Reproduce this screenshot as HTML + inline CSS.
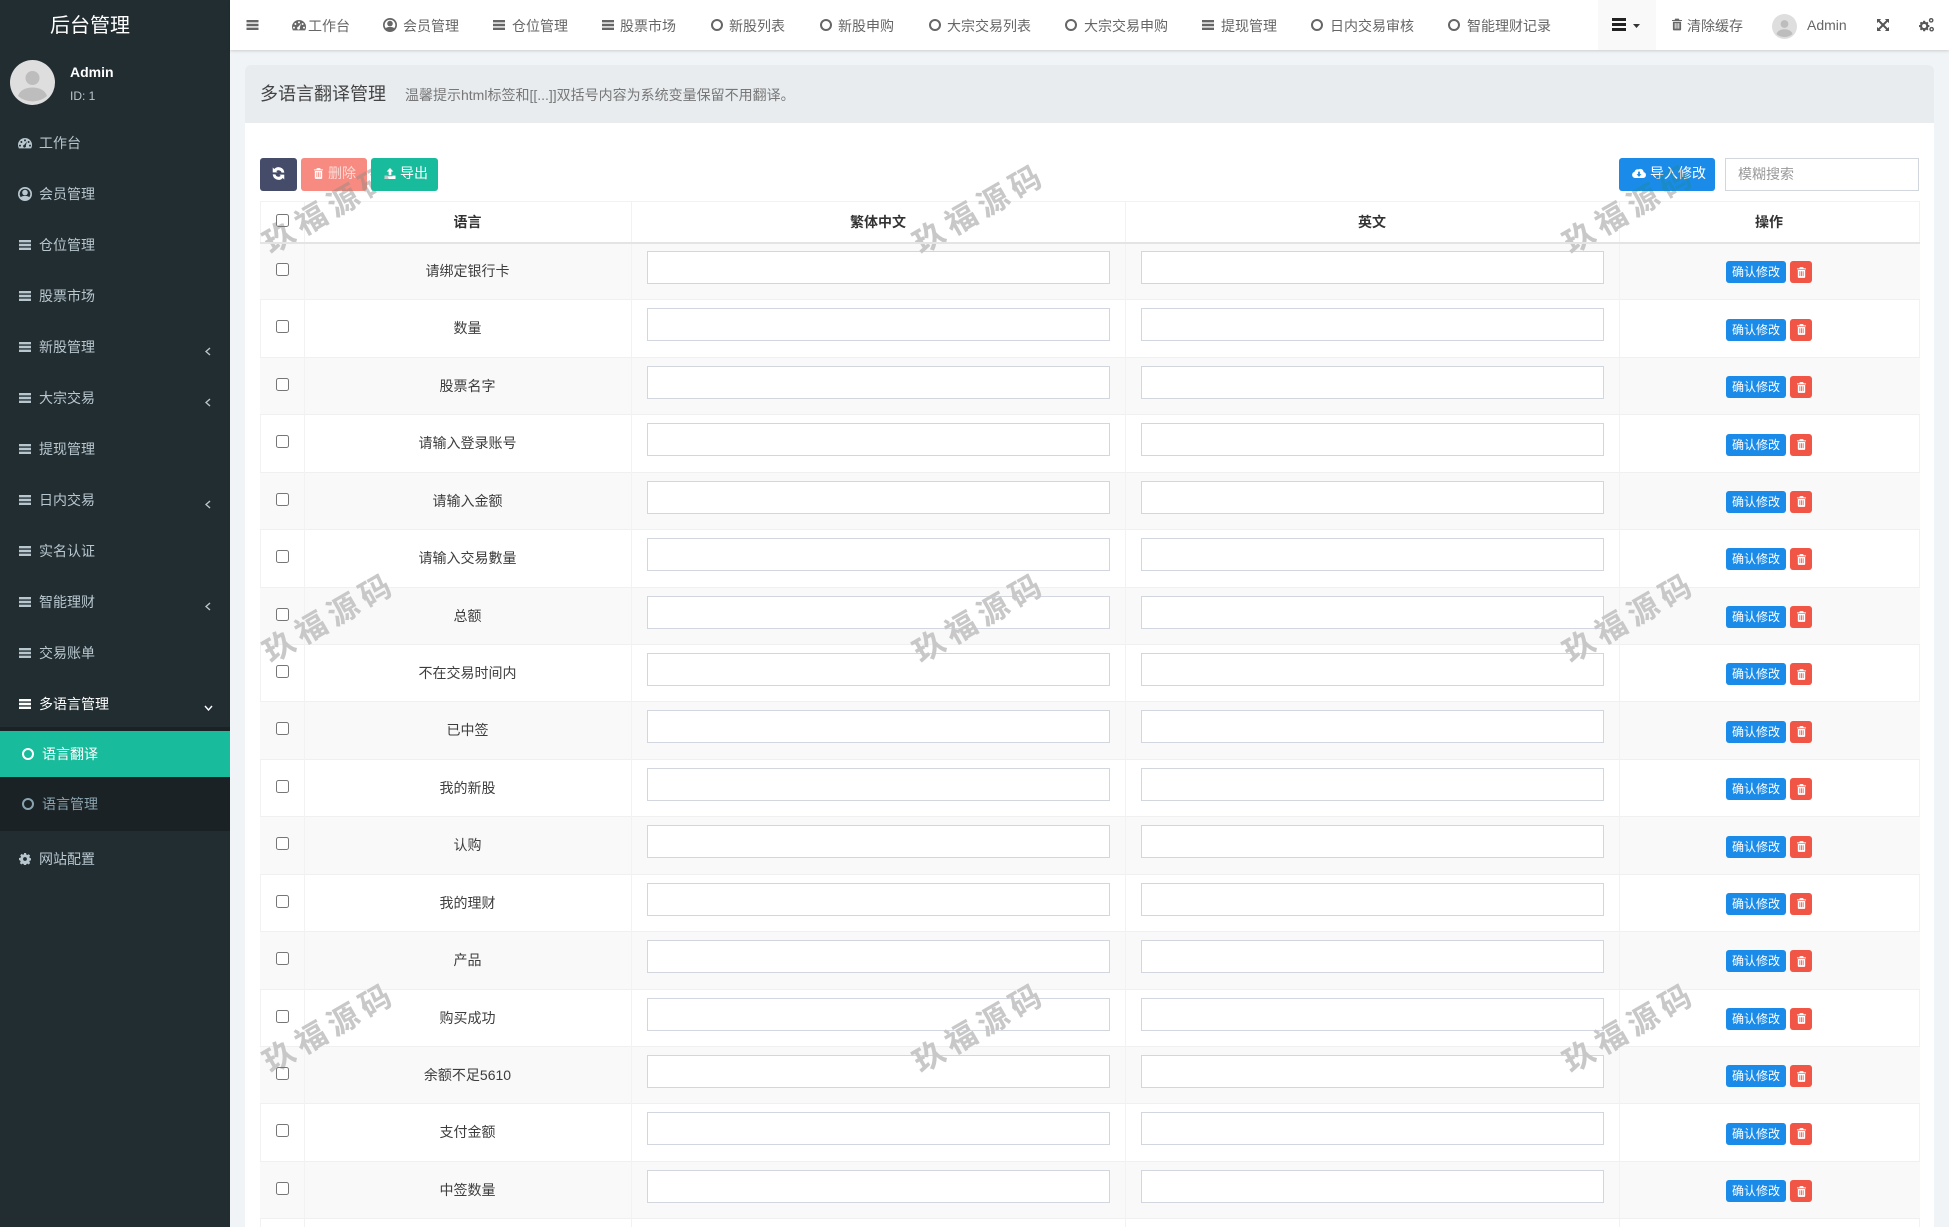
<!DOCTYPE html>
<html lang="zh-CN"><head><meta charset="utf-8"><title>多语言翻译管理</title>
<style>
*{box-sizing:border-box}
html,body{margin:0;padding:0;width:1949px;height:1227px;overflow:hidden;background:#f1f4f6;font-family:"Liberation Sans","Noto Sans CJK SC",sans-serif;font-size:14px;color:#444}
body{position:relative}
#wrap{position:absolute;left:0;top:0;width:1949px;height:1227px;overflow:hidden;contain:paint}
.a{position:absolute}
.t{position:absolute;line-height:20px;white-space:nowrap}
svg{position:absolute;fill:currentColor;display:block}
#side{position:absolute;left:0;top:0;width:230px;height:1227px;background:#222d32;color:#b8c7ce}
.mi{position:absolute;left:0;width:230px;height:20px}
.mi svg{left:19px;top:5px;width:12px;height:10px}
.mi svg.ic{left:18px;top:3px;width:14px;height:14px}
.mi span{position:absolute;left:39px;top:0;line-height:20px;white-space:nowrap}
.mi svg.chev{left:205px;top:10px;width:6px;height:9px;fill:none;stroke:currentColor;stroke-width:1.4}
#nav{position:absolute;left:230px;top:0;width:1719px;height:50px;background:#fff;box-shadow:0 1px 3px rgba(0,0,0,.16);color:#666}
.n{position:absolute;top:16px;line-height:20px;white-space:nowrap}
#nav svg{top:20px;width:12px;height:10px}
#nav svg.c{top:19px;width:12px;height:12px;fill:none;stroke:currentColor;stroke-width:2}
#nav svg.ic{top:18px;width:14px;height:14px}
#head{position:absolute;left:245px;top:65px;width:1689px;height:58px;background:#e8ecef;border-radius:6px 6px 0 0}
#card{position:absolute;left:245px;top:123px;width:1689px;height:1104px;background:#fff}
.btn{position:absolute;top:158px;height:33px;border-radius:3px;color:#fff}
.btn svg{top:10px;width:13px;height:13px}
.btn span{position:absolute;top:5px;line-height:20px;white-space:nowrap}
#tb{position:absolute;left:260px;top:201px;width:1660px;height:1026px;border:1px solid #f2f2f2;border-bottom:0}
.vl{position:absolute;top:201px;width:1px;height:1026px;background:#f2f2f2}
.th{position:absolute;top:212px;line-height:20px;font-weight:bold;color:#333;text-align:center}
.row{position:absolute;left:260px;width:1660px;height:57.43px;top:calc(241.95px + var(--i)*57.43px);border-top:1px solid #f0f0f0}
.row.g{background:#f9f9f9}
.chk{position:absolute;left:16px;top:20px;width:13px;height:13px;margin:0}
.l{position:absolute;left:44px;width:327px;top:18px;line-height:20px;text-align:center;color:#3d3d3d}
.inp{position:absolute;top:8px;height:33px;width:463px;border:1px solid #d2d6de;background:#fff;padding:0;margin:0}
.zh{left:387px}.en{left:881px}
.ok{position:absolute;left:1466px;top:18.3px;width:60px;height:22px;background:#1a8be8;border-radius:3px;color:#fff;font-size:12px;line-height:22px;text-align:center}
.del{position:absolute;left:1530px;top:18.3px;width:22px;height:22px;background:#f05545;border-radius:3px;color:#fff}
.del svg{left:6.5px;top:5.5px;width:9px;height:11px}
.wm{position:absolute;width:200px;margin-left:-100px;text-align:center;transform:translateY(-50%) rotate(-30deg);font:bold 31px "Noto Sans CJK SC","Liberation Sans",sans-serif;line-height:40px;letter-spacing:6px;text-indent:6px;color:#c8c8c8;mix-blend-mode:darken;white-space:nowrap;pointer-events:none}
</style></head><body><div id="wrap">
<svg width="0" height="0" style="position:absolute"><defs>
<symbol id="bars" viewBox="0 0 12 10"><path d="M0 0h12v2.400H0zM0 3.800h12v2.400H0zM0 7.600h12v2.400H0z"/></symbol>
<symbol id="circ" viewBox="0 0 12 12"><circle cx="6" cy="6" r="5"/></symbol>
<symbol id="dash" viewBox="0 0 14 14"><path fill-rule="evenodd" d="M7 2a7 7 0 0 1 7 7c0 1.300-.3 2.400-.9 3.400H.9A6.800 6.800 0 0 1 0 9a7 7 0 0 1 7-7zM7 3.400a1 1 0 1 0 0 2 1 1 0 0 0 0-2zM3.400 5a1 1 0 1 0 0 2 1 1 0 0 0 0-2zM10.600 5a1 1 0 1 0 0 2 1 1 0 0 0 0-2zM2 8.600a1 1 0 1 0 0 2 1 1 0 0 0 0-2zM12 8.600a1 1 0 1 0 0 2 1 1 0 0 0 0-2zM9 5.500L6.300 8.800a1.400 1.400 0 1 0 1.500.8z"/></symbol>
<symbol id="user" viewBox="0 0 14 14"><path fill-rule="evenodd" d="M7 0a7 7 0 1 1 0 14A7 7 0 0 1 7 0zM7 1.700a5.300 5.300 0 0 0-4.200 8.500C3.600 9.300 5 9 7 9s3.400.3 4.200 1.200A5.300 5.300 0 0 0 7 1.700zM7 2.800a2.800 2.800 0 1 1 0 5.600A2.800 2.800 0 0 1 7 2.800z"/></symbol>
<symbol id="trash" viewBox="0 0 11 13"><path fill-rule="evenodd" d="M3.500 0h4l.7 1.500H11v1.200H0V1.500h2.800zM1 3.500h9V12a1 1 0 0 1-1 1H2a1 1 0 0 1-1-1zM3 5v6h1V5zM5 5v6h1V5zM7 5v6h1V5z"/></symbol>
<symbol id="gear" viewBox="0 0 14 14"><path fill-rule="evenodd" d="M5.800 0h2.400l.3 1.800 1.300.6 1.500-1 1.700 1.700-1 1.500.6 1.300 1.800.3v2.400l-1.800.3-.6 1.300 1 1.500-1.700 1.700-1.500-1-1.300.6-.3 1.800H5.800l-.3-1.800-1.300-.6-1.500 1-1.700-1.700 1-1.500-.6-1.300L0 8.200V5.800l1.800-.3.6-1.300-1-1.500 1.700-1.700 1.500 1 1.300-.6zM7 4.800a2.200 2.200 0 1 0 0 4.400 2.200 2.200 0 0 0 0-4.400z"/></symbol>
<symbol id="sync" viewBox="0 0 14 14"><path d="M13.200 6h-2.900A3.500 3.500 0 0 0 4.600 4.400L6 5.800H.8V.6l1.600 1.600A6.200 6.200 0 0 1 13.200 6zM.8 8h2.900a3.500 3.500 0 0 0 5.700 1.600L8 8.200h5.200v5.200l-1.600-1.600A6.200 6.200 0 0 1 .8 8z"/></symbol>
<symbol id="up" viewBox="0 0 13 13"><path d="M6.500 0l4 4.200H8.100v4.300H4.900V4.200H2.500zM0 9h3.600v.8h5.800V9H13v4H0z"/></symbol>
<symbol id="cloud" viewBox="0 0 15 11"><path fill-rule="evenodd" d="M3.500 11A3.500 3.500 0 0 1 2.600 4.100 3.500 3.500 0 0 1 7 1.500 3.700 3.700 0 0 1 12.600 4.500 3.300 3.300 0 0 1 12 11zM6.500 4v2.800H4.800l2.700 3 2.700-3H8.500V4z"/></symbol>
<symbol id="exp" viewBox="0 0 13 13"><path d="M0 0h4.500L3 1.500l3.500 3.400L10 1.500 8.500 0H13v4.500L11.500 3 8.100 6.500l3.400 3.500 1.500-1.500V13H8.500l1.500-1.500-3.500-3.400L3 11.500 4.500 13H0V8.500L1.500 10l3.400-3.500L1.500 3 0 4.500z"/></symbol>
<symbol id="cogs" viewBox="0 0 16 15"><path fill-rule="evenodd" d="M4.500 3h2l.3 1.300.9.400 1.100-.7 1.300 1.300-.7 1.100.4.900 1.300.3v2l-1.300.3-.4.900.7 1.100-1.300 1.300-1.100-.7-.9.400-.3 1.300h-2l-.3-1.300-.9-.4-1.100.7L.9 11.900l.7-1.100-.4-.9L0 9.600v-2l1.200-.3.4-.9-.7-1.100L2.200 4l1.100.7.9-.4zM5.500 6.400a2.200 2.200 0 1 0 0 4.400 2.200 2.200 0 0 0 0-4.400z"/><path fill-rule="evenodd" d="M13 0a2.500 2.500 0 1 1 0 5 2.500 2.500 0 0 1 0-5zM13 1.500a1 1 0 1 0 0 2 1 1 0 0 0 0-2zM13.500 9.500a2.500 2.500 0 1 1 0 5 2.500 2.500 0 0 1 0-5zM13.500 11a1 1 0 1 0 0 2 1 1 0 0 0 0-2z"/></symbol>
<symbol id="ava" viewBox="0 0 45 45"><circle cx="22.500" cy="22.500" r="22.500" fill="#dedede"/><circle cx="22.500" cy="18" r="7" fill="#bdbdbd"/><path d="M8 36c2-6 8-8.500 14.500-8.500S35 30 37 36a22 22 0 0 1-29 0z" fill="#bdbdbd"/></symbol>
</defs></svg>

<div id="side">
<div class="t" style="left:50px;top:12px;width:80px;font-size:20px;line-height:28px;color:#fff">后台管理</div>
<svg style="left:10px;top:60px;width:45px;height:45px"><use href="#ava"/></svg>
<div class="t" style="left:70px;top:62px;color:#fff;font-weight:bold">Admin</div>
<div class="t" style="left:70px;top:86px;font-size:12px">ID: 1</div>
<div class="mi" style="top:133px"><svg class="ic"><use href="#dash"/></svg><span>工作台</span></div>
<div class="mi" style="top:184px"><svg class="ic"><use href="#user"/></svg><span>会员管理</span></div>
<div class="mi" style="top:235px"><svg><use href="#bars"/></svg><span>仓位管理</span></div>
<div class="mi" style="top:286px"><svg><use href="#bars"/></svg><span>股票市场</span></div>
<div class="mi" style="top:337px"><svg><use href="#bars"/></svg><span>新股管理</span><svg class="chev" viewBox="0 0 6 9"><path d="M5 1L1 4.500 5 8"/></svg></div>
<div class="mi" style="top:388px"><svg><use href="#bars"/></svg><span>大宗交易</span><svg class="chev" viewBox="0 0 6 9"><path d="M5 1L1 4.500 5 8"/></svg></div>
<div class="mi" style="top:439px"><svg><use href="#bars"/></svg><span>提现管理</span></div>
<div class="mi" style="top:490px"><svg><use href="#bars"/></svg><span>日内交易</span><svg class="chev" viewBox="0 0 6 9"><path d="M5 1L1 4.500 5 8"/></svg></div>
<div class="mi" style="top:541px"><svg><use href="#bars"/></svg><span>实名认证</span></div>
<div class="mi" style="top:592px"><svg><use href="#bars"/></svg><span>智能理财</span><svg class="chev" viewBox="0 0 6 9"><path d="M5 1L1 4.500 5 8"/></svg></div>
<div class="mi" style="top:643px"><svg><use href="#bars"/></svg><span>交易账单</span></div>
<div class="mi" style="top:694px;color:#fff"><svg><use href="#bars"/></svg><span>多语言管理</span><svg style="left:204px;top:11px;width:9px;height:6px;fill:none;stroke:currentColor;stroke-width:1.4" viewBox="0 0 9 6"><path d="M1 1l3.500 4L8 1"/></svg></div>
<div class="a" style="left:0;top:727px;width:230px;height:104px;background:#1a2226"></div>
<div class="a" style="left:0;top:731px;width:230px;height:46px;background:#18bc9c"></div>
<div class="mi" style="top:744px;color:#fff"><svg style="left:22px;top:4px;width:12px;height:12px;fill:none;stroke:currentColor;stroke-width:2" viewBox="0 0 12 12"><use href="#circ"/></svg><span style="left:42px">语言翻译</span></div>
<div class="mi" style="top:794px;color:#8aa4af"><svg style="left:22px;top:4px;width:12px;height:12px;fill:none;stroke:currentColor;stroke-width:2" viewBox="0 0 12 12"><use href="#circ"/></svg><span style="left:42px">语言管理</span></div>
<div class="mi" style="top:849px"><svg class="ic" style="left:19px;top:4px;width:12px;height:12px"><use href="#gear"/></svg><span>网站配置</span></div>
</div>

<div id="nav">
<svg style="left:16px;top:20px;width:13px;height:10px"><use href="#bars"/></svg>
<svg class="ic" style="left:62px"><use href="#dash"/></svg><span class="n" style="left:78px">工作台</span>
<svg class="ic" style="left:153px"><use href="#user"/></svg><span class="n" style="left:173px">会员管理</span>
<svg style="left:263px"><use href="#bars"/></svg><span class="n" style="left:282px">仓位管理</span>
<svg style="left:372px"><use href="#bars"/></svg><span class="n" style="left:390px">股票市场</span>
<svg class="c" style="left:481px" viewBox="0 0 12 12"><use href="#circ"/></svg><span class="n" style="left:499px">新股列表</span>
<svg class="c" style="left:590px" viewBox="0 0 12 12"><use href="#circ"/></svg><span class="n" style="left:608px">新股申购</span>
<svg class="c" style="left:699px" viewBox="0 0 12 12"><use href="#circ"/></svg><span class="n" style="left:717px">大宗交易列表</span>
<svg class="c" style="left:835px" viewBox="0 0 12 12"><use href="#circ"/></svg><span class="n" style="left:854px">大宗交易申购</span>
<svg style="left:972px"><use href="#bars"/></svg><span class="n" style="left:991px">提现管理</span>
<svg class="c" style="left:1081px" viewBox="0 0 12 12"><use href="#circ"/></svg><span class="n" style="left:1100px">日内交易审核</span>
<svg class="c" style="left:1218px" viewBox="0 0 12 12"><use href="#circ"/></svg><span class="n" style="left:1237px">智能理财记录</span>
<div class="a" style="left:1368px;top:0;width:58px;height:50px;background:#f9f9f9"></div>
<svg style="left:1382px;top:18px;width:14px;height:13px;color:#222" viewBox="0 0 14 13" preserveAspectRatio="none"><path d="M0 0h14v3H0zM0 5h14v3H0zM0 10h14v3H0z"/></svg>
<svg style="left:1403px;top:24px;width:7px;height:4px;color:#333" viewBox="0 0 7 4"><path d="M0 0h7L3.500 4z"/></svg>
<svg style="left:1442px;top:18px;width:10px;height:13px"><use href="#trash"/></svg><span class="n" style="left:1457px">清除缓存</span>
<svg style="left:1542px;top:14px;width:25px;height:25px"><use href="#ava"/></svg><span class="n" style="left:1577px;top:15px">Admin</span>
<svg style="left:1647px;top:19px;width:12px;height:12px;color:#555"><use href="#exp"/></svg>
<svg style="left:1689px;top:18px;width:15px;height:14px;color:#555"><use href="#cogs"/></svg>
</div>

<div id="head">
<div class="t" style="left:15px;top:16px;font-size:18px;line-height:26px;color:#444">多语言翻译管理</div>
<div class="t" style="left:160px;top:20px;color:#777">温馨提示html标签和[[...]]双括号内容为系统变量保留不用翻译。</div>
</div>
<div id="card"></div>

<div id="tb"></div>
<div class="a" style="left:260px;top:242px;width:1660px;height:2px;background:#e4e4e4;z-index:2"></div>
<input type="checkbox" class="a" style="left:276px;top:214px;width:13px;height:13px;margin:0">
<div class="th" style="left:304px;width:327px">语言</div>
<div class="th" style="left:631px;width:494px">繁体中文</div>
<div class="th" style="left:1125px;width:494px">英文</div>
<div class="th" style="left:1619px;width:300px">操作</div>

<div class="row g" style="--i:0"><input type="checkbox" class="chk"><div class="l">请绑定银行卡</div><input class="inp zh"><input class="inp en"><div class="ok">确认修改</div><div class="del"><svg><use href="#trash"/></svg></div></div>
<div class="row" style="--i:1"><input type="checkbox" class="chk"><div class="l">数量</div><input class="inp zh"><input class="inp en"><div class="ok">确认修改</div><div class="del"><svg><use href="#trash"/></svg></div></div>
<div class="row g" style="--i:2"><input type="checkbox" class="chk"><div class="l">股票名字</div><input class="inp zh"><input class="inp en"><div class="ok">确认修改</div><div class="del"><svg><use href="#trash"/></svg></div></div>
<div class="row" style="--i:3"><input type="checkbox" class="chk"><div class="l">请输入登录账号</div><input class="inp zh"><input class="inp en"><div class="ok">确认修改</div><div class="del"><svg><use href="#trash"/></svg></div></div>
<div class="row g" style="--i:4"><input type="checkbox" class="chk"><div class="l">请输入金额</div><input class="inp zh"><input class="inp en"><div class="ok">确认修改</div><div class="del"><svg><use href="#trash"/></svg></div></div>
<div class="row" style="--i:5"><input type="checkbox" class="chk"><div class="l">请输入交易數量</div><input class="inp zh"><input class="inp en"><div class="ok">确认修改</div><div class="del"><svg><use href="#trash"/></svg></div></div>
<div class="row g" style="--i:6"><input type="checkbox" class="chk"><div class="l">总额</div><input class="inp zh"><input class="inp en"><div class="ok">确认修改</div><div class="del"><svg><use href="#trash"/></svg></div></div>
<div class="row" style="--i:7"><input type="checkbox" class="chk"><div class="l">不在交易时间内</div><input class="inp zh"><input class="inp en"><div class="ok">确认修改</div><div class="del"><svg><use href="#trash"/></svg></div></div>
<div class="row g" style="--i:8"><input type="checkbox" class="chk"><div class="l">已中签</div><input class="inp zh"><input class="inp en"><div class="ok">确认修改</div><div class="del"><svg><use href="#trash"/></svg></div></div>
<div class="row" style="--i:9"><input type="checkbox" class="chk"><div class="l">我的新股</div><input class="inp zh"><input class="inp en"><div class="ok">确认修改</div><div class="del"><svg><use href="#trash"/></svg></div></div>
<div class="row g" style="--i:10"><input type="checkbox" class="chk"><div class="l">认购</div><input class="inp zh"><input class="inp en"><div class="ok">确认修改</div><div class="del"><svg><use href="#trash"/></svg></div></div>
<div class="row" style="--i:11"><input type="checkbox" class="chk"><div class="l">我的理财</div><input class="inp zh"><input class="inp en"><div class="ok">确认修改</div><div class="del"><svg><use href="#trash"/></svg></div></div>
<div class="row g" style="--i:12"><input type="checkbox" class="chk"><div class="l">产品</div><input class="inp zh"><input class="inp en"><div class="ok">确认修改</div><div class="del"><svg><use href="#trash"/></svg></div></div>
<div class="row" style="--i:13"><input type="checkbox" class="chk"><div class="l">购买成功</div><input class="inp zh"><input class="inp en"><div class="ok">确认修改</div><div class="del"><svg><use href="#trash"/></svg></div></div>
<div class="row g" style="--i:14"><input type="checkbox" class="chk"><div class="l">余额不足5610</div><input class="inp zh"><input class="inp en"><div class="ok">确认修改</div><div class="del"><svg><use href="#trash"/></svg></div></div>
<div class="row" style="--i:15"><input type="checkbox" class="chk"><div class="l">支付金额</div><input class="inp zh"><input class="inp en"><div class="ok">确认修改</div><div class="del"><svg><use href="#trash"/></svg></div></div>
<div class="row g" style="--i:16"><input type="checkbox" class="chk"><div class="l">中签数量</div><input class="inp zh"><input class="inp en"><div class="ok">确认修改</div><div class="del"><svg><use href="#trash"/></svg></div></div>
<div class="row" style="--i:17"></div>

<div class="vl" style="left:304px"></div>
<div class="vl" style="left:631px"></div>
<div class="vl" style="left:1125px"></div>
<div class="vl" style="left:1619px"></div>

<div class="btn" style="left:260px;width:37px;background:#444c69"><svg style="left:12px;top:9px;width:13px;height:13px"><use href="#sync"/></svg></div>
<div class="btn" style="left:301px;width:66px;background:#f78b81"><svg style="left:13px;top:10px;width:9px;height:11px"><use href="#trash"/></svg><span style="left:27px;color:#fbdcd8">删除</span></div>
<div class="btn" style="left:371px;width:67px;background:#18bc9c"><svg style="left:13px;top:10px;width:12px;height:11px"><use href="#up"/></svg><span style="left:29px">导出</span></div>
<div class="btn" style="left:1619px;width:96px;background:#1a8be8"><svg style="left:13px;top:10px;width:14px;height:10px"><use href="#cloud"/></svg><span style="left:31px">导入修改</span></div>
<div class="a" style="left:1725px;top:158px;width:194px;height:33px;background:#fff;border:1px solid #d2d6de;color:#999;line-height:31px;padding-left:12px">模糊搜索</div>

<div class="wm" style="left:326px;top:208px">玖福源码</div>
<div class="wm" style="left:976px;top:208px">玖福源码</div>
<div class="wm" style="left:1626px;top:208px">玖福源码</div>
<div class="wm" style="left:326px;top:617px">玖福源码</div>
<div class="wm" style="left:976px;top:617px">玖福源码</div>
<div class="wm" style="left:1626px;top:617px">玖福源码</div>
<div class="wm" style="left:326px;top:1027px">玖福源码</div>
<div class="wm" style="left:976px;top:1027px">玖福源码</div>
<div class="wm" style="left:1626px;top:1027px">玖福源码</div>
</div></body></html>
